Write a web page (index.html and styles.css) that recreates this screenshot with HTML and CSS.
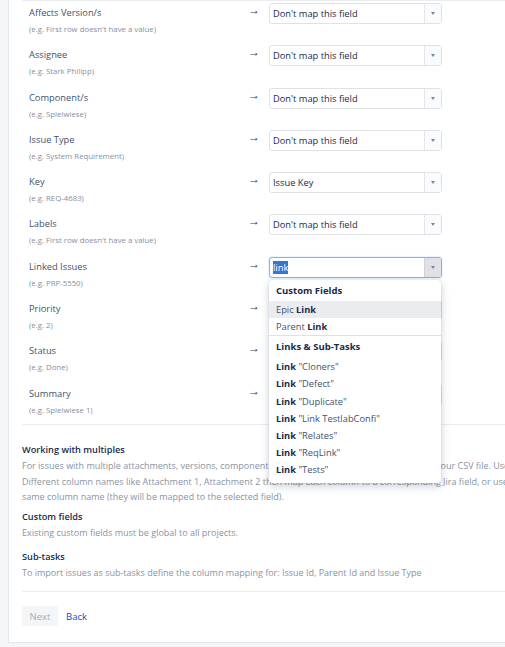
FILE: index.html
```html
<!DOCTYPE html>
<html>
<head>
    <title>CSV field mapping</title>
    <link rel="stylesheet" href="styles.css">
</head>
<body>
    <div class="panel">
        <div class="mapping">
            <div class="row">
                <div class="field"><div class="name">Affects Version/s</div><div class="example">(e.g. First row doesn't have a value)</div></div>
                <div class="arrow">→</div>
                <div class="select"><span class="value">Don't map this field</span><span class="toggle"></span></div>
            </div>
            <div class="row">
                <div class="field"><div class="name">Assignee</div><div class="example">(e.g. Stark Philipp)</div></div>
                <div class="arrow">→</div>
                <div class="select"><span class="value">Don't map this field</span><span class="toggle"></span></div>
            </div>
            <div class="row">
                <div class="field"><div class="name">Component/s</div><div class="example">(e.g. Spielwiese)</div></div>
                <div class="arrow">→</div>
                <div class="select"><span class="value">Don't map this field</span><span class="toggle"></span></div>
            </div>
            <div class="row">
                <div class="field"><div class="name">Issue Type</div><div class="example">(e.g. System Requirement)</div></div>
                <div class="arrow">→</div>
                <div class="select"><span class="value">Don't map this field</span><span class="toggle"></span></div>
            </div>
            <div class="row">
                <div class="field"><div class="name">Key</div><div class="example">(e.g. REQ-4683)</div></div>
                <div class="arrow">→</div>
                <div class="select"><span class="value">Issue Key</span><span class="toggle"></span></div>
            </div>
            <div class="row">
                <div class="field"><div class="name">Labels</div><div class="example">(e.g. First row doesn't have a value)</div></div>
                <div class="arrow">→</div>
                <div class="select"><span class="value">Don't map this field</span><span class="toggle"></span></div>
            </div>
            <div class="row">
                <div class="field"><div class="name">Linked Issues</div><div class="example">(e.g. PRP-5550)</div></div>
                <div class="arrow">→</div>
                <div class="select focused">
                    <span class="value"><span class="typed">link</span></span><span class="toggle"></span>
                    <div class="menu">
                        <div class="group-title">Custom Fields</div>
                        <div class="item active">Epic <b>Link</b></div>
                        <div class="item">Parent <b>Link</b></div>
                        <div class="group">
                            <div class="group-title">Links &amp; Sub-Tasks</div>
                            <div class="item"><b>Link</b> "Cloners"</div>
                            <div class="item"><b>Link</b> "Defect"</div>
                            <div class="item"><b>Link</b> "Duplicate"</div>
                            <div class="item"><b>Link</b> "Link TestlabConfi"</div>
                            <div class="item"><b>Link</b> "Relates"</div>
                            <div class="item"><b>Link</b> "ReqLink"</div>
                            <div class="item"><b>Link</b> "Tests"</div>
                        </div>
                    </div>
                </div>
            </div>
            <div class="row">
                <div class="field"><div class="name">Priority</div><div class="example">(e.g. 2)</div></div>
                <div class="arrow">→</div>
                <div class="select"><span class="value">Don't map this field</span><span class="toggle"></span></div>
            </div>
            <div class="row">
                <div class="field"><div class="name">Status</div><div class="example">(e.g. Done)</div></div>
                <div class="arrow">→</div>
                <div class="select"><span class="value">Don't map this field</span><span class="toggle"></span></div>
            </div>
            <div class="row">
                <div class="field"><div class="name">Summary</div><div class="example">(e.g. Spielwiese 1)</div></div>
                <div class="arrow">→</div>
                <div class="select"><span class="value">Don't map this field</span><span class="toggle"></span></div>
            </div>
        </div>

        <div class="notes">
            <div class="note">
                <h3>Working with multiples</h3>
                <p>For issues with multiple attachments, versions, components and labels, create multiple columns in your CSV file. Use the<br>
                Different column names like Attachment 1, Attachment 2 then map each column to a corresponding Jira field, or use the<br>
                same column name (they will be mapped to the selected field).</p>
            </div>
            <div class="note note-wide">
                <h3>Custom fields</h3>
                <p>Existing custom fields must be global to all projects.</p>
            </div>
            <div class="note">
                <h3>Sub-tasks</h3>
                <p>To import issues as sub-tasks define the column mapping for: Issue Id, Parent Id and Issue Type</p>
            </div>
        </div>

        <div class="actions">
            <button class="btn-next" disabled>Next</button>
            <a class="btn-back" href="#">Back</a>
        </div>
    </div>
</body>
</html>
```

FILE: styles.css
```css
body {
    margin: 0;
    background-color: #f4f5f7;
    font-family: "Open Sans", "Noto Sans", sans-serif;
    color: #172b4d;
    overflow: hidden;
    height: 647px;
}

.panel {
    margin-left: 8px;
    width: 700px;
    background-color: #fff;
    border-left: 1px solid #e4e6ea;
    border-bottom: 1px solid #e4e6ea;
    padding: 0 0 16px 13px;
}

.mapping {
    border-top: 1px solid #ebecf0;
    border-bottom: 1px solid #ebecf0;
}

.row {
    display: grid;
    grid-template-columns: 219px 21px 173px;
    height: 42.3px;
    padding-left: 7px;
}

.field {
    padding-top: 5px;
}

.name {
    font-size: 9.3px;
    line-height: 14px;
    color: #42526e;
}

.example {
    font-size: 7.8px;
    line-height: 14px;
    margin-top: 2px;
    color: #8590a2;
}

.arrow {
    font-size: 12px;
    line-height: 14px;
    padding-top: 2px;
    color: #253858;
}

.select {
    position: relative;
    margin-top: 2px;
    height: 21px;
    box-sizing: border-box;
    border: 1px solid #dfe1e6;
    border-radius: 3px;
    display: flex;
    background-color: #fff;
}

.value {
    flex: 1;
    padding-left: 3px;
    font-size: 9.3px;
    line-height: 19px;
    color: #172b4d;
    white-space: nowrap;
    overflow: hidden;
}

.toggle {
    position: relative;
    width: 16px;
    border-left: 1px solid #e4e6ea;
    background-color: #fafbfc;
}

.toggle::after {
    content: "";
    position: absolute;
    left: 6px;
    top: 8px;
    border-top: 3px solid #7a869a;
    border-left: 2px solid transparent;
    border-right: 2px solid transparent;
}

.select.focused {
    border-color: #7fb2ff;
    box-shadow: 0 0 2px rgba(76, 154, 255, 0.4);
}

.select.focused .toggle {
    background-color: #dfe1e6;
    border-left-color: #d0d4da;
}

.typed {
    background-color: #3874d8;
    color: #fff;
}

.menu {
    position: absolute;
    top: 22px;
    left: -1px;
    width: 172px;
    background-color: #fff;
    border-radius: 3px;
    box-shadow: 0 3px 8px rgba(9, 30, 66, 0.22), 0 0 1px rgba(9, 30, 66, 0.3);
    padding-bottom: 5px;
    z-index: 10;
}

.group-title {
    height: 21px;
    line-height: 21px;
    padding-left: 7px;
    font-size: 9.5px;
    font-weight: 700;
    color: #172b4d;
}

.group .group-title {
    height: 22px;
    line-height: 22px;
}

.group {
    border-top: 1px solid #dfe1e6;
}

.item {
    height: 17.2px;
    line-height: 17px;
    padding-left: 7px;
    font-size: 9.3px;
    color: #42526e;
    white-space: nowrap;
}

.item b {
    color: #172b4d;
}

.item.active {
    background-color: #ebecf0;
}

.notes {
    padding-top: 17px;
}

.note {
    margin-bottom: 4px;
}

.note-wide {
    margin-bottom: 8px;
}

.note h3 {
    margin: 0;
    font-size: 9.2px;
    font-weight: 600;
    line-height: 16px;
    color: #172b4d;
}

.note p {
    margin: 0;
    font-size: 9px;
    line-height: 15.7px;
    color: #8993a4;
    white-space: nowrap;
}

.actions {
    margin-top: 11px;
    border-top: 1px solid #ebecf0;
    padding-top: 14px;
    display: flex;
    align-items: center;
    gap: 8px;
}

.btn-next {
    width: 36px;
    height: 20px;
    border: none;
    border-radius: 3px;
    background-color: #f4f5f7;
    color: #a5adba;
    font-family: inherit;
    font-size: 9.5px;
    padding: 0;
}

.btn-back {
    color: #0052cc;
    font-size: 9.5px;
    text-decoration: none;
}
```
